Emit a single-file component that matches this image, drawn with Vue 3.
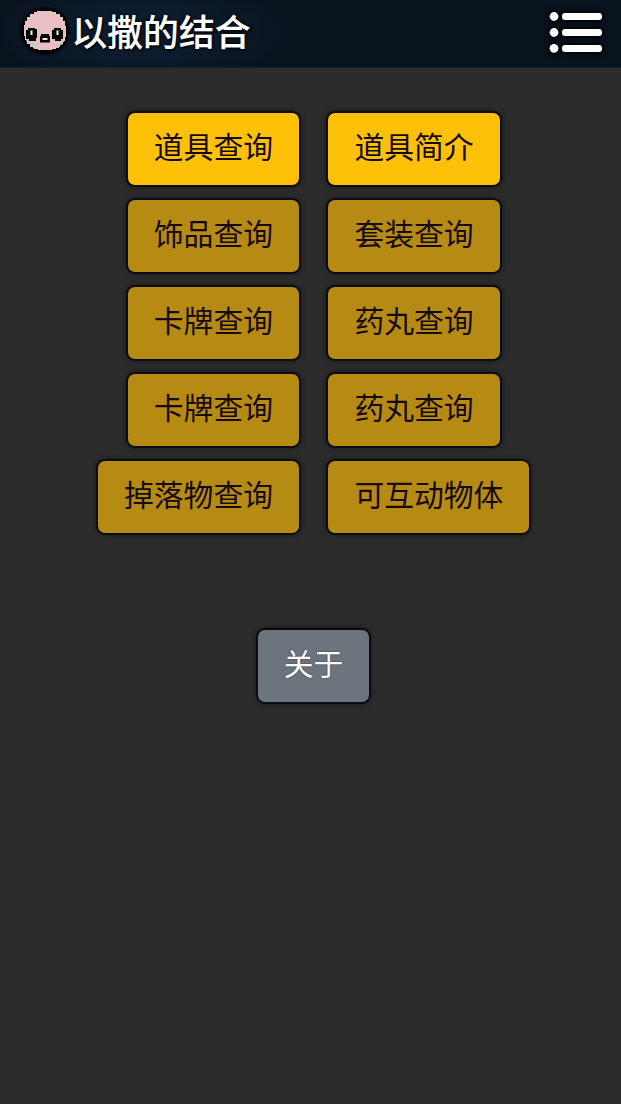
<script setup>
const rows = [
  [{ label: '道具查询', active: true }, { label: '道具简介', active: true }],
  [{ label: '饰品查询' }, { label: '套装查询' }],
  [{ label: '卡牌查询' }, { label: '药丸查询' }],
  [{ label: '卡牌查询' }, { label: '药丸查询' }],
  [{ label: '掉落物查询' }, { label: '可互动物体' }],
]
</script>

<template>
  <div class="page">
    <header class="bar">
      <svg class="logo" viewBox="0 0 48 48" aria-hidden="true">
        <ellipse cx="24" cy="24" rx="24.500" ry="23.500" fill="#020508" />
        <path fill="#e9bfc1" d="M16 4h15v1h4v2h4v3h3v4h2v5h1v11h-1v4h-2v3h-3v3h-4v2h-4v1H17v-1h-4v-2H9v-3H6v-4H4v-4H3V18h1v-4h2v-4h3V7h4V5h3z" />
        <path fill="#c3cdc8" d="M5 32h4v3h4v3h3v3h-4v-2H9v-3H6zM36 36h4v-3h3v2h-2v3h-3v3h-3z" />
        <path fill="#000" d="M7 21h7v1h2v9h-1v3H8v-2H5v-9h2zM33 21h7v2h2v9h-2v2h-6v-2h-3v-9h2zM20 27h8v2h1v6.500H19V29h1z" />
        <path fill="#fff" d="M9.500 23.500h2v4.500h-2zM35.500 23.500h2v4.500h-2z" />
        <path fill="#f8e6e5" d="M21.500 31h5v2h-5z" />
      </svg>
      <h1 class="title">以撒的结合</h1>
      <svg class="menu" viewBox="0 0 54 44" aria-label="菜单">
        <g fill="#fff">
          <circle cx="5" cy="6.500" r="4.400" />
          <circle cx="5" cy="22.500" r="4.400" />
          <circle cx="5" cy="38.300" r="4.400" />
          <rect x="13" y="3" width="40" height="7" rx="3" />
          <rect x="13" y="19" width="40" height="7" rx="3" />
          <rect x="13" y="35" width="40" height="7" rx="3" />
        </g>
      </svg>
    </header>
    <main>
      <div v-for="(row, i) in rows" :key="i" class="row">
        <button v-for="item in row" :key="item.label" class="btn" :class="{ active: item.active }">{{ item.label }}</button>
      </div>
      <div class="about-row">
        <button class="btn about">关于</button>
      </div>
    </main>
  </div>
</template>

<style>
body { margin: 0; background: #2b2b2b; }
</style>

<style scoped>
.page {
  width: 100%;
  height: 1104px;
  overflow: hidden;
  background: #2b2b2b;
  font-family: "Noto Sans CJK SC", sans-serif;
}
.bar {
  box-sizing: border-box;
  height: 68px;
  padding: 0 18px 2px 21px;
  display: flex;
  align-items: center;
  background: radial-gradient(ellipse 150px 55px at 140px 32px, #0c1c2d 40%, #08131e);
  border-bottom: 1px solid #15212a;
}
.logo {
  width: 48px;
  height: 48px;
  margin-top: -4px;
  flex: none;
  overflow: visible;
  filter: drop-shadow(0 0 1px #000);
}
.title {
  margin: -6px auto 0 2.5px;
  font-size: 35.8px;
  line-height: 52px;
  font-weight: 500;
  color: #fff;
  -webkit-text-stroke: 0.2px #fff;
  text-shadow: 0 0 3px #000, 0 0 3px #000, 1px 1px 2px #000;
}
.menu {
  width: 54px;
  height: 44px;
  margin-top: -2px;
  flex: none;
  filter: drop-shadow(0 0 2px #000) drop-shadow(0 0 2px #000);
}
main { padding-top: 45px; }
.row {
  display: grid;
  grid-template-columns: 299px 1fr;
  column-gap: 29.4px;
  height: 72px;
  margin-bottom: 15px;
}
.btn {
  box-sizing: border-box;
  height: 72px;
  padding: 0 26px 8px;
  border: 0;
  border-radius: 7px;
  background: #b58b14;
  box-shadow: 0 0 0 2px #0c0c10, 0 0 4px 2px #14171b;
  color: #160a0c;
  font: 400 29.8px/64px "Noto Sans CJK SC", sans-serif;
  white-space: nowrap;
  justify-self: start;
}
.btn:first-child { justify-self: end; }
.btn.active { background: #ffc107; }
.about-row {
  display: flex;
  justify-content: center;
  padding: 82px 0 0 6px;
}
.btn.about {
  background: #6c757d;
  color: #fff;
  text-shadow: 0 0 2px #30383f;
}
</style>
